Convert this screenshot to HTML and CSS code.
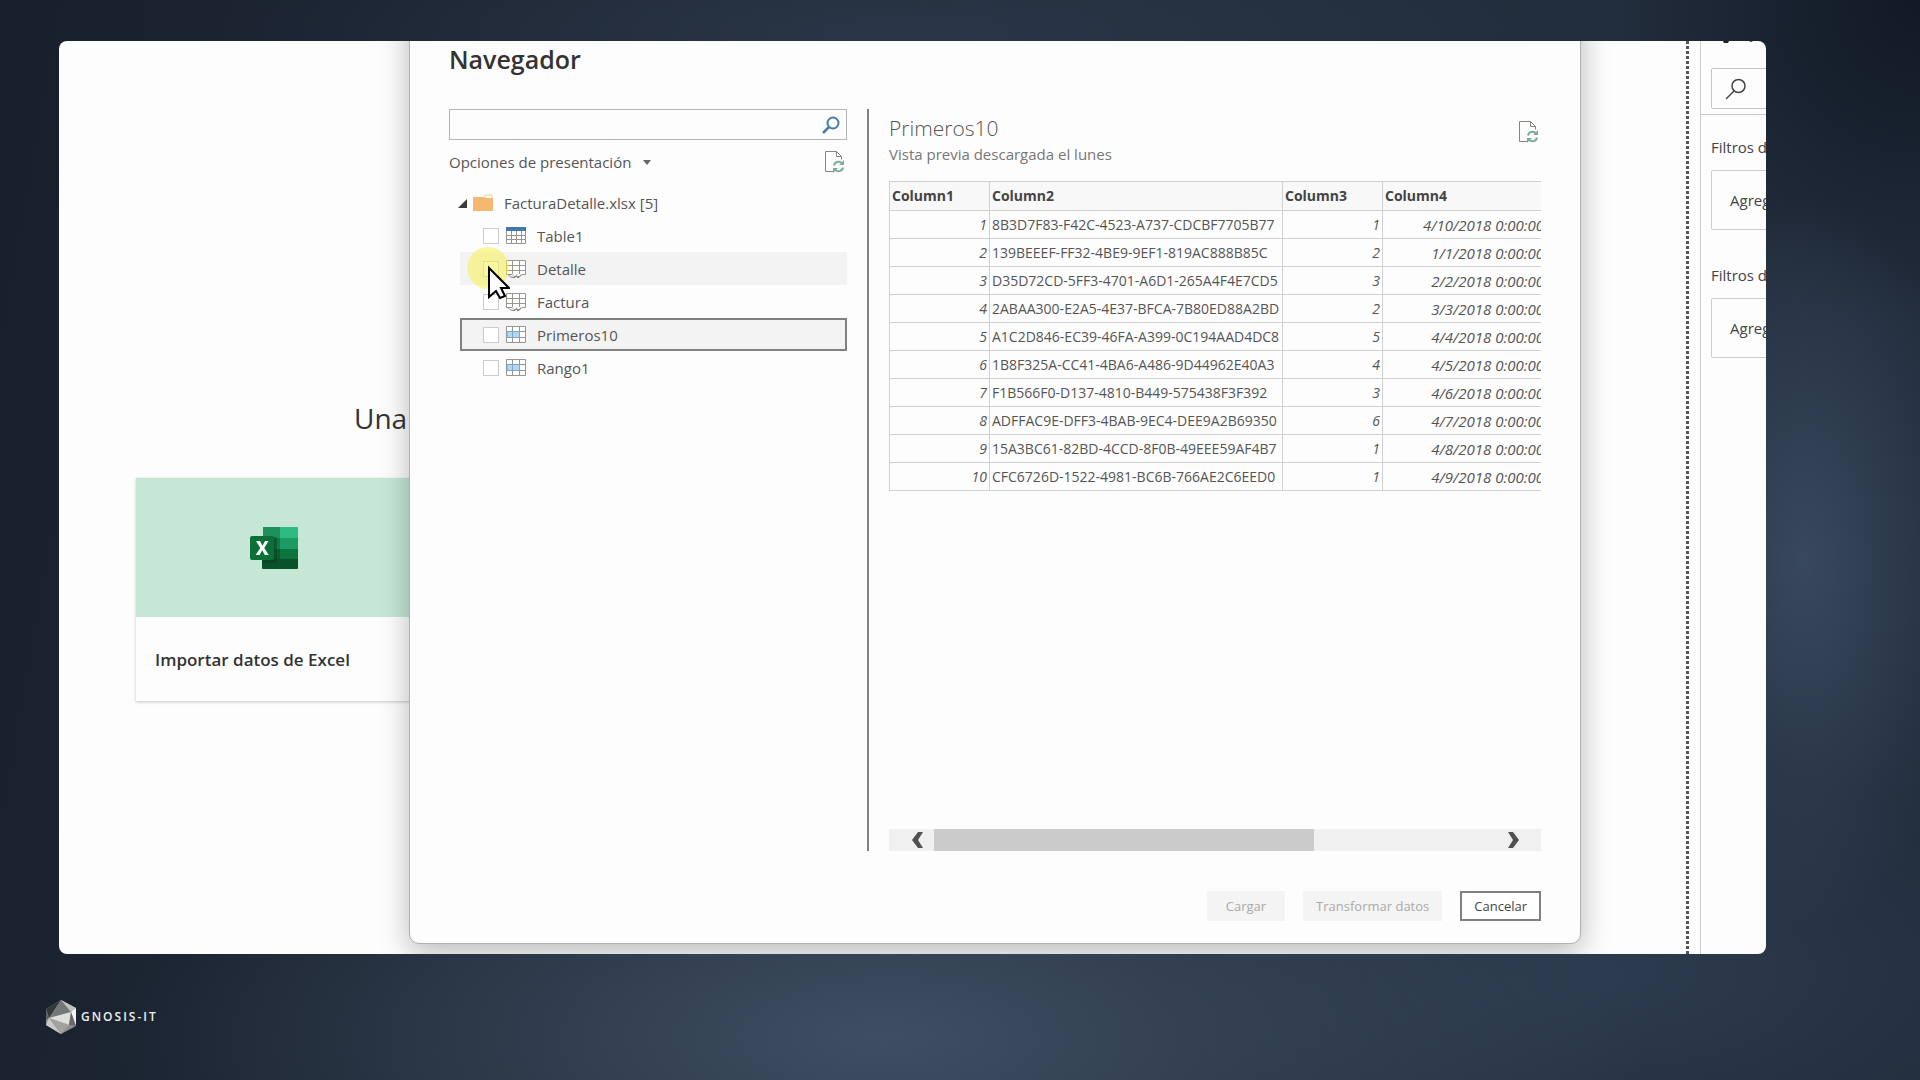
FILE: index.html
```html
<!DOCTYPE html>
<html lang="es">
<head>
<meta charset="utf-8">
<title>Navegador</title>
<link rel="stylesheet" href="styles.css">
</head>
<body>
<svg class="defs" aria-hidden="true">
  <symbol id="refresh" viewBox="0 0 20 22">
    <path d="M8 20.500H.5V.5h11l5 5v3M11.500.5v5h5" fill="none" stroke="#85857d"/>
    <path d="M9 14.500a4.500 4.500 0 0 1 8-2M18 16.500a4.500 4.500 0 0 1-8 2" fill="none" stroke="#79ad97" stroke-width="2"/>
    <path d="M19 9v5h-5zM8 22v-5h5z" fill="#79ad97"/>
  </symbol>
  <symbol id="sheet" viewBox="0 0 20 18">
    <path d="M.5.5h19v14H16l-2 2H8l-2-2H.5zM0 5.500h19M0 10.500h19M6.500 0v14M13.500 0v14" fill="#fff" stroke="#96968e"/>
    <path d="M2 14.500q2 3 5 3h2l2-3M11 17.500h2l2-3" fill="none" stroke="#85857d"/>
  </symbol>
  <symbol id="range" viewBox="0 0 20 18">
    <path d="M.5.5h19v16H.5zM0 5.500h19M0 11.500h19M6.500 0v16M13.500 0v16" fill="#fff" stroke="#96968e"/>
    <path d="M1 5.500h12.500v6H1z" fill="#b4d6ef" stroke="#7ba5ca"/>
    <path d="M6.500 5.500v6" stroke="#7ba5ca"/>
  </symbol>
</svg>
<div class="frame">
  <main class="canvas">
    <h2 class="headline">Una</h2>
    <a class="card" href="#">
      <span class="card-art">
        <svg width="48" height="42" viewBox="0 0 48 42">
          <path d="M13 0h17v11H13z" fill="#1f8f5c"/><path d="M30 0h17q1 0 1 1v10H30z" fill="#2dbb84"/>
          <path d="M12 11h18v11H12z" fill="#0f7a43"/><path d="M30 11h18v11H30z" fill="#1b9a64"/>
          <path d="M12 22h18v10H12z" fill="#0c5a30"/><path d="M30 22h18v10H30z" fill="#0c743d"/>
          <path d="M12 32h36v9q0 1-1 1H13q-1 0-1-1z" fill="#0a5029"/>
          <path d="M12 10h13q2 0 2 2v22q0 2-2 2H12z" fill="#07391d" opacity=".5"/>
          <rect y="9" width="24" height="24" rx="2" fill="#0b6f37"/>
          <path d="M6 14h4l2.500 4.800L15 14h3.500l-4.200 7 4.500 7h-4l-2.600-4.700L9.500 28H5.700l4.600-7z" fill="#fff"/>
        </svg>
      </span>
      <span class="card-label">Importar datos de Excel</span>
    </a>
  </main>
  <div class="rail"></div>
  <aside class="filters">
    <div class="filters-top">
      <svg class="marks" width="50" height="3" viewBox="0 0 50 3"><path d="M12 0h6l-1 2h-4zM38 0h4l-2 1z" fill="#222"/></svg>
      <label class="filter-search">
        <svg width="22" height="22" viewBox="0 0 22 22"><circle cx="13.500" cy="8" r="6.500" fill="none" stroke="#444" stroke-width="1.500"/><path d="M9 13l-8 8" stroke="#444" stroke-width="1.500"/></svg>
        <input type="text" value="Buscar" aria-label="Buscar">
      </label>
    </div>
    <h3 class="filter-title">Filtros de esta página</h3>
    <button class="drop">Agregar campos de datos aquí</button>
    <h3 class="filter-title">Filtros de todas las páginas</h3>
    <button class="drop">Agregar campos de datos aquí</button>
  </aside>

  <section class="dialog" role="dialog" aria-labelledby="dialog-title">
    <h1 id="dialog-title" class="dialog-title">Navegador</h1>
    <div class="panes">
      <div class="tree-pane">
        <label class="search">
          <input type="text" aria-label="Buscar elementos">
          <svg width="18" height="18" viewBox="0 0 18 18"><circle cx="11" cy="7" r="5.500" fill="none" stroke="#4a7ab3" stroke-width="2"/><path d="M7 11l-6 6" stroke="#4a7ab3" stroke-width="2.500"/></svg>
        </label>
        <div class="options">
          <button class="plain">Opciones de presentación <svg width="8" height="5" viewBox="0 0 8 5"><path d="M0 0h8L4 5z" fill="#666"/></svg></button>
          <button class="plain" aria-label="Actualizar"><svg width="20" height="22"><use href="#refresh"/></svg></button>
        </div>
        <div class="root">
          <svg width="9" height="9" viewBox="0 0 9 9"><path d="M9 0v9H0z" fill="#3c3c3c"/></svg>
          <svg width="20" height="18" viewBox="0 0 20 18"><path d="M11 4l2-3h6v4" fill="#fff" stroke="#efc893"/><path d="M0 3h11l2 1h7v13H0z" fill="#f4b873"/></svg>
          <span>FacturaDetalle.xlsx [5]</span>
        </div>
        <ul class="items">
          <li><label class="item"><input type="checkbox"><svg width="20" height="18" viewBox="0 0 20 18"><path d="M.5.5h19v16H.5zM0 8.500h19M0 12.500h19M5.500 3v13M10.500 3v13M15.500 3v13" fill="#fff" stroke="#96968e"/><path d="M0 0h20v4H0z" fill="#4178b0"/></svg>Table1</label></li>
          <li><label class="item hover"><input type="checkbox"><svg width="20" height="18"><use href="#sheet"/></svg>Detalle
            <svg class="pointer" width="44" height="56" viewBox="0 0 44 56"><circle cx="22" cy="22" r="21" fill="#f8f050" opacity=".55"/><path d="M23 22v29l7-6 4 7 5-2-4-8h8z" fill="#fff" stroke="#000" stroke-width="2"/></svg></label></li>
          <li><label class="item"><input type="checkbox"><svg width="20" height="18"><use href="#sheet"/></svg>Factura</label></li>
          <li><label class="item selected"><input type="checkbox"><svg width="20" height="18"><use href="#range"/></svg>Primeros10</label></li>
          <li><label class="item"><input type="checkbox"><svg width="20" height="18"><use href="#range"/></svg>Rango1</label></li>
        </ul>
      </div>
      <div class="preview">
        <div class="preview-head">
          <div>
            <h2 class="preview-title">Primeros10</h2>
            <p class="preview-note">Vista previa descargada el lunes</p>
          </div>
          <button class="plain" aria-label="Actualizar vista previa"><svg width="20" height="22"><use href="#refresh"/></svg></button>
        </div>
        <div class="grid">
          <table>
            <colgroup><col class="c-num"><col class="c-id"><col class="c-num"><col class="c-date"></colgroup>
            <thead><tr><th>Column1</th><th>Column2</th><th>Column3</th><th>Column4</th></tr></thead>
            <tbody>
              <tr><td>1</td><td>8B3D7F83-F42C-4523-A737-CDCBF7705B77</td><td>1</td><td>4/10/2018 0:00:00</td></tr>
              <tr><td>2</td><td>139BEEEF-FF32-4BE9-9EF1-819AC888B85C</td><td>2</td><td>1/1/2018 0:00:00</td></tr>
              <tr><td>3</td><td>D35D72CD-5FF3-4701-A6D1-265A4F4E7CD5</td><td>3</td><td>2/2/2018 0:00:00</td></tr>
              <tr><td>4</td><td>2ABAA300-E2A5-4E37-BFCA-7B80ED88A2BD</td><td>2</td><td>3/3/2018 0:00:00</td></tr>
              <tr><td>5</td><td>A1C2D846-EC39-46FA-A399-0C194AAD4DC8</td><td>5</td><td>4/4/2018 0:00:00</td></tr>
              <tr><td>6</td><td>1B8F325A-CC41-4BA6-A486-9D44962E40A3</td><td>4</td><td>4/5/2018 0:00:00</td></tr>
              <tr><td>7</td><td>F1B566F0-D137-4810-B449-575438F3F392</td><td>3</td><td>4/6/2018 0:00:00</td></tr>
              <tr><td>8</td><td>ADFFAC9E-DFF3-4BAB-9EC4-DEE9A2B69350</td><td>6</td><td>4/7/2018 0:00:00</td></tr>
              <tr><td>9</td><td>15A3BC61-82BD-4CCD-8F0B-49EEE59AF4B7</td><td>1</td><td>4/8/2018 0:00:00</td></tr>
              <tr><td>10</td><td>CFC6726D-1522-4981-BC6B-766AE2C6EED0</td><td>1</td><td>4/9/2018 0:00:00</td></tr>
            </tbody>
          </table>
        </div>
        <div class="scroll">
          <button class="plain arrow" aria-label="Izquierda"><svg width="12" height="16" viewBox="0 0 12 16"><path d="M6 0h5L6 8l5 8H6L0 8z" fill="#505050"/></svg></button>
          <div class="track"><div class="thumb"></div></div>
          <button class="plain arrow" aria-label="Derecha"><svg width="12" height="16" viewBox="0 0 12 16"><path d="M1 0h5l6 8-6 8H1l5-8z" fill="#505050"/></svg></button>
        </div>
      </div>
    </div>
    <div class="actions">
      <button class="btn" disabled>Cargar</button>
      <button class="btn" disabled>Transformar datos</button>
      <button class="btn cancel">Cancelar</button>
    </div>
  </section>
</div>
<footer class="brand">
  <svg width="30" height="34" viewBox="0 0 30 34">
    <path d="M15 0l15 8v18L15 34 0 25V9z" fill="#8f9190"/>
    <path d="M15 0L0 9l3 9z" fill="#34363a"/><path d="M0 9v11l3-2z" fill="#60626a"/>
    <path d="M15 0L3 18l22-6z" fill="#74777a"/><path d="M15 0l15 8-5 4z" fill="#c0c1c1"/>
    <path d="M30 8v18l-5-14z" fill="#f3f3f5"/><path d="M25 12L3 18l20 7z" fill="#dededd"/>
    <path d="M3 18l-3 7 15 9z" fill="#cacaca"/><path d="M3 18l20 7-8 9z" fill="#a2a29f"/><path d="M25 12l5 14-7-1z" fill="#66686c"/>
  </svg>
  <span>GNOSIS-IT</span>
</footer>
</body>
</html>
```
FILE: styles.css
```css
* { box-sizing: border-box; }

body {
  margin: 0;
  min-height: 100vh;
  display: flex;
  flex-direction: column;
  padding: 41px 154px 0 46px;
  font-family: "Open Sans", "Noto Sans", sans-serif;
  font-size: 15px;
  line-height: 20px;
  color: #555;
  background:
    radial-gradient(ellipse 9% 34% at 94% 52%, rgba(68, 86, 110, .65), transparent),
    radial-gradient(ellipse 40% 26% at 46% 96%, rgba(72, 88, 110, .75), transparent),
    radial-gradient(ellipse 24% 20% at 84% 90%, rgba(52, 68, 90, .6), transparent),
    radial-gradient(ellipse 34% 10% at 46% 3%, rgba(52, 64, 86, .5), transparent),
    radial-gradient(ellipse 16% 30% at 100% 0%, rgba(12, 20, 30, .8), transparent),
    linear-gradient(100deg, #18202c, #222e3c 50%, #222d3d);
}

h1, h2, h3, p, ul { margin: 0; padding: 0; font-weight: 400; }
button, input { font: inherit; color: inherit; }
svg { display: block; flex: none; }
.defs { position: absolute; width: 0; height: 0; }
.plain { border: 0; padding: 0; background: none; display: flex; align-items: center; gap: 12px; }

.frame {
  position: relative;
  flex: 1;
  display: flex;
  margin-left: 13px;
  overflow: hidden;
  border-radius: 8px;
  background: #fdfdfd;
}

.canvas { flex: 1; padding: 357px 0 0 77px; }
.headline { padding-left: 218px; font-size: 28px; line-height: 40px; color: #333; }
.card {
  display: flex;
  flex-direction: column;
  width: 275px;
  margin-top: 40px;
  text-decoration: none;
  box-shadow: 0 1px 3px rgba(0, 0, 0, .22);
}
.card-art { display: flex; align-items: center; justify-content: center; height: 139px; background: #c6e7d6; }
.card-label { padding: 33px 19px 31px; font-size: 17px; font-weight: 600; color: #333; }

.rail { width: 3px; margin-right: 11px; background: repeating-linear-gradient(#555 0 3px, transparent 3px 5px); }
.filters { width: 66px; overflow: hidden; border-left: 1px solid #ccc; color: #444; white-space: nowrap; }
.filters-top { height: 74px; border-bottom: 1px solid #c8c8c8; }
.filter-search {
  display: flex;
  align-items: center;
  gap: 18px;
  width: 200px;
  height: 41px;
  margin: 27px 0 0 10px;
  padding-left: 13px;
  border: 1px solid #c4c4cc;
  border-radius: 2px;
}
.filter-search input { width: 120px; padding: 0; border: 0; background: none; }
.filter-title { margin: 22px 0 13px 10px; font-size: 15px; line-height: 20px; }
.drop {
  display: block;
  width: 240px;
  height: 60px;
  margin: 0 0 35px 10px;
  padding: 0 18px;
  border: 1px solid #ccc;
  border-radius: 2px;
  background: none;
  text-align: left;
}
.marks { margin-bottom: -3px; margin-left: 10px; }

.dialog {
  position: absolute;
  top: -40px;
  left: 350px;
  right: 185px;
  bottom: 10px;
  display: flex;
  flex-direction: column;
  padding: 39px 39px 22px 39px;
  border: 1px solid #b0b0b0;
  border-radius: 10px;
  background: #fdfdfd;
  box-shadow: 0 8px 30px rgba(0, 0, 0, .28);
}
.dialog-title { font-size: 25px; line-height: 36px; font-weight: 600; color: #333; margin-bottom: 32px; }
.panes { flex: 1; display: flex; }

.tree-pane { width: 420px; padding-right: 20px; border-right: 2px solid #848484; }
.search { display: flex; align-items: center; height: 31px; padding-right: 6px; border: 1px solid #b4b4bc; }
.search input { flex: 1; border: 0; outline: 0; background: none; }
.options { display: flex; justify-content: space-between; align-items: center; height: 24px; margin: 10px 2px 19px 0; }
.root { display: flex; align-items: center; height: 20px; margin-bottom: 6px; padding-left: 9px; }
.root svg + svg { margin: 0 11px 0 6px; }
.items { list-style: none; padding-left: 11px; }
.item { position: relative; display: flex; align-items: center; height: 33px; padding-left: 23px; border: 0 solid #808080; }
.item input { appearance: none; width: 16px; height: 16px; margin: 0 7px 0 0; border: 1px solid #ccc; background: #fff; }
.item svg { margin-right: 11px; }
.item.hover { background: #f3f3f4; }
.item.selected { padding-left: 21px; border-width: 2px; background: #f3f3f4; }
.item .pointer { position: absolute; left: 6px; top: -6px; z-index: 1; margin: 0; }

.preview { flex: 1; min-width: 0; display: flex; flex-direction: column; padding-left: 20px; }
.preview-head { display: flex; justify-content: space-between; align-items: flex-start; margin-bottom: 17px; }
.preview-head .plain { margin: 12px 2px 0 0; }
.preview-title { font-size: 21px; line-height: 30px; font-weight: 300; margin-top: 4px; }
.preview-note { margin-top: 1px; font-size: 15px; line-height: 20px; color: #777; }

.grid { overflow: hidden; }
table { width: 671px; table-layout: fixed; border-collapse: collapse; font-size: 14px; line-height: 20px; }
.c-num { width: 100px; }
.c-id { width: 293px; }
th, td { height: 28px; padding: 0 2px; border: 1px solid #d0d0d0; overflow: hidden; white-space: nowrap; text-align: right; font-style: italic; }
th { height: 29px; text-align: left; font-style: normal; font-weight: 700; color: #444; background: #f8f8f8; }
td:nth-child(2) { text-align: left; font-style: normal; }
td:nth-child(4) { font-size: 15px; padding-right: 15px; }

.scroll { display: flex; height: 22px; margin-top: auto; background: #f0f0f0; }
.arrow { width: 45px; justify-content: center; padding-left: 12px; }
.arrow:last-child { width: 56px; padding: 0; }
.track { flex: 1; }
.thumb { width: 69%; height: 100%; background: #cbcbcb; }

.actions { display: flex; justify-content: flex-end; gap: 18px; margin-top: 40px; }
.btn { height: 30px; padding: 0 13px; border: 0; background: #f5f4f4; font-size: 13px; }
.btn:first-child { padding: 0 19px; }
.btn:disabled { color: #aaa; }
.cancel { padding: 0 12px; border: 2px solid #808080; background: #fff; color: #444; }

.brand { display: flex; align-items: center; gap: 5px; height: 126px; color: #eee; font-size: 12px; font-weight: 600; letter-spacing: 2px; }
```
